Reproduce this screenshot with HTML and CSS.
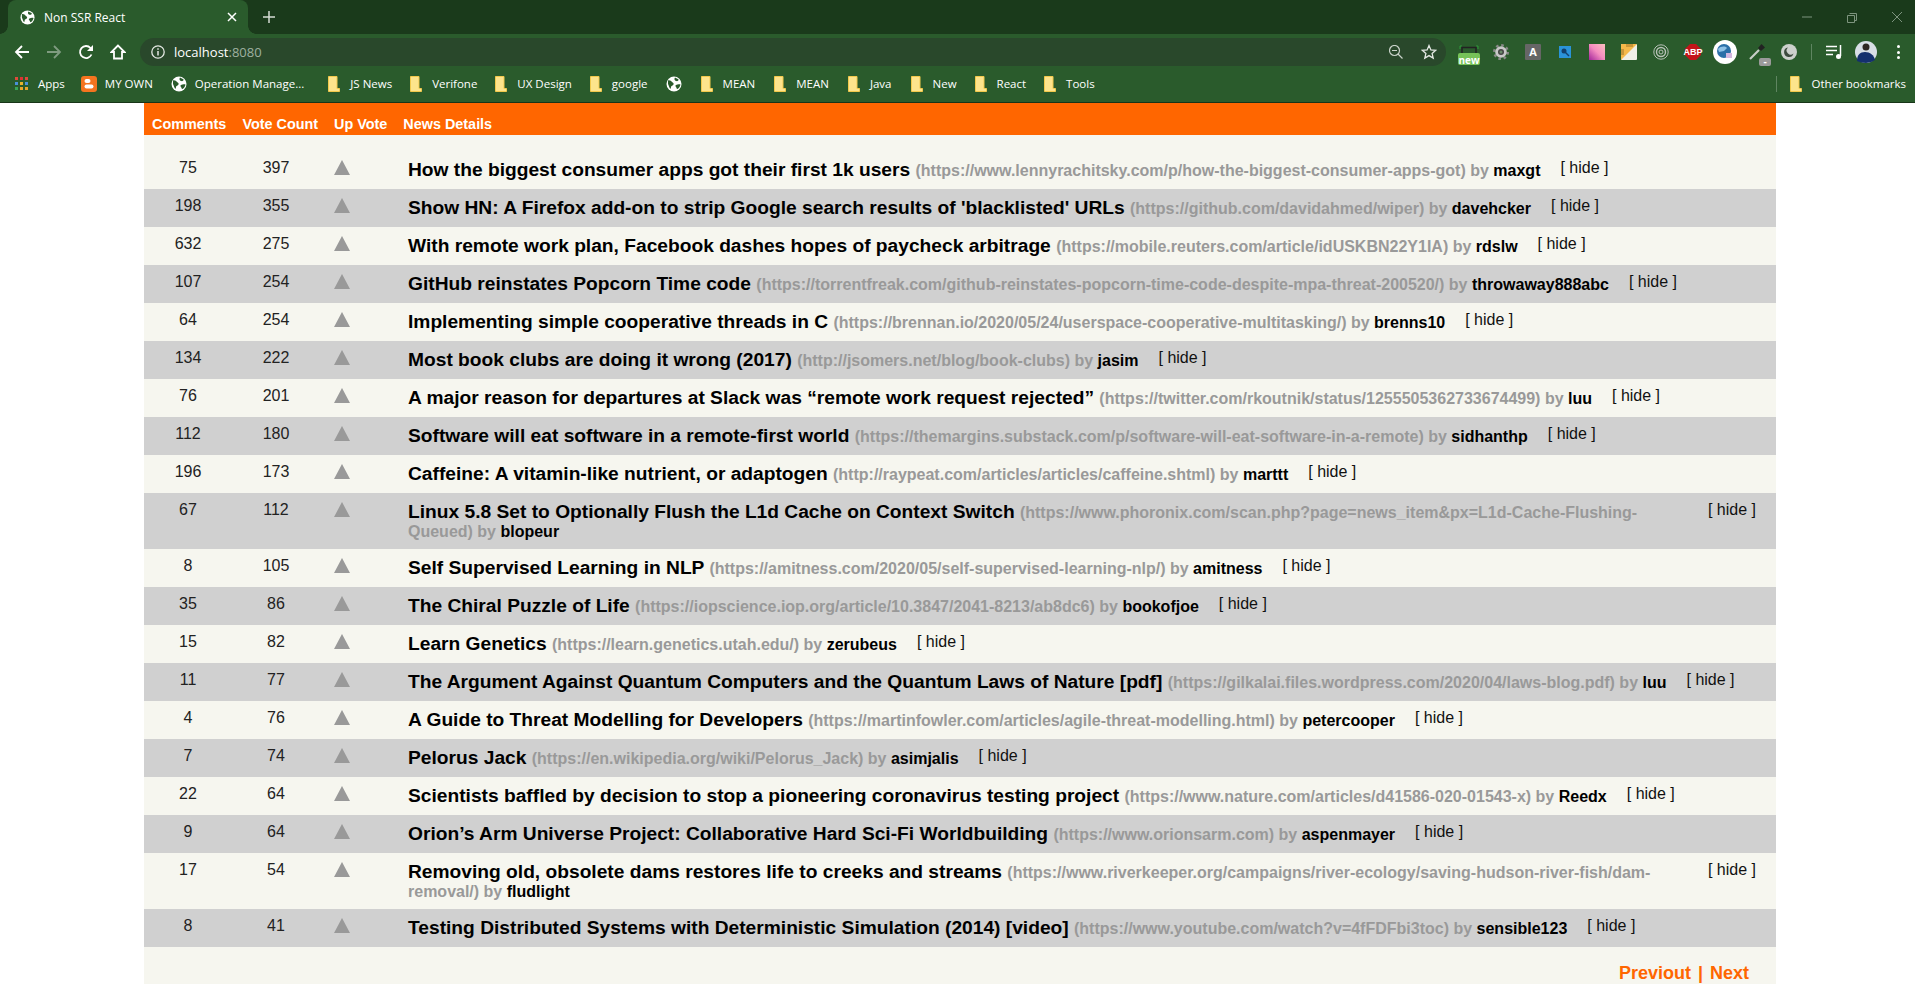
FILE: index.html

```html
<!DOCTYPE html>
<html lang="en">
<head>
    <meta charset="UTF-8">
    <meta name="viewport" content="width=device-width, initial-scale=1.0">
    <title>Non SSR React</title>
    <link rel="stylesheet" href="styles.css">
</head>
<body>

<svg class="sprites" width="0" height="0">
    <symbol id="globe" viewBox="0 0 16 16">
        <circle cx="8" cy="8" r="7.5" fill="#fff"/>
        <path d="M2 4.5c2-.5 3 .5 4 1.5s2 1 1.5 2.5-2.5 1-2.5 2.5-.5 2-1 1.5S2.5 9 2 8zM9 1.5c1 1 3 1 3.500 2s-1 2-2.500 1.500S8 3 9 1.500zM10 9c1.500-1 3.500-1 4.500-.5-.5 2-1.500 3.500-3 4.500-1 0-1-1.500-1.500-2s-1-1.500 0-2z" fill="#2a5b2c"/>
    </symbol>
    <symbol id="folder" viewBox="0 0 12 16">
        <path d="M.5.5h8.500v12h2.500v3H.5z" fill="#fde48c" stroke="#f2c94c"/>
    </symbol>
</svg>

<div class="browser">
    <div class="tab-strip">
        <div class="tab">
            <svg class="tab-icon"><use href="#globe"/></svg>
            <span class="tab-title">Non SSR React</span>
            <svg class="tab-close" viewBox="0 0 10 10"><path d="M1 1l8 8M9 1l-8 8" stroke="#fff" stroke-width="1.5"/></svg>
        </div>
        <svg class="new-tab" viewBox="0 0 12 12"><path d="M6 0v12M0 6h12" stroke="#d5dcd5" stroke-width="1.5"/></svg>
        <div class="window-controls">
            <svg viewBox="0 0 12 12"><path d="M1 6h10" stroke="#7d947e"/></svg>
            <svg viewBox="0 0 12 12"><path d="M3.500 2.500h7v7h-2M1.500 4.500h7v7h-7z" fill="none" stroke="#7d947e"/></svg>
            <svg viewBox="0 0 12 12"><path d="M1 1l10 10M11 1L1 11" stroke="#7d947e"/></svg>
        </div>
    </div>

    <div class="toolbar">
        <div class="nav-buttons">
            <div class="slot"><svg viewBox="0 0 16 16"><path d="M15 8H2M8 2L2 8l6 6" fill="none" stroke="#fff" stroke-width="1.8"/></svg></div>
            <div class="slot"><svg viewBox="0 0 16 16"><path d="M1 8h13M8 2l6 6-6 6" fill="none" stroke="#7f9b80" stroke-width="1.8"/></svg></div>
            <div class="slot"><svg viewBox="0 0 16 16"><path d="M13.500 10.500A6 6 0 1 1 12.500 4L14 5.500" fill="none" stroke="#fff" stroke-width="1.8"/><path d="M15 1v6H9z" fill="#fff"/></svg></div>
            <div class="slot"><svg viewBox="0 0 16 16"><path d="M8 1.500L1.500 8H4v6.500h8V8h2.500z" fill="none" stroke="#fff" stroke-width="1.8"/></svg></div>
        </div>
        <div class="address-bar">
            <svg class="info-icon" viewBox="0 0 14 14"><circle cx="7" cy="7" r="6.2" fill="none" stroke="#e4e8e4" stroke-width="1.3"/><path d="M7 6v4.500M7 3.200v1.500" stroke="#e4e8e4" stroke-width="1.5"/></svg>
            <span class="url">localhost<span class="url-port">:8080</span></span>
            <svg class="zoom-icon" viewBox="0 0 14 14"><circle cx="5.5" cy="5.5" r="5" fill="none" stroke="#c9d2c9" stroke-width="1.2"/><path d="M9 9l4.500 4.500M3 5.500h5" stroke="#c9d2c9" stroke-width="1.2"/></svg>
            <svg class="star-icon" viewBox="0 0 16 16"><path d="M8 1.500l1.900 4.400 4.800.4-3.600 3.100 1.100 4.700L8 11.600l-4.200 2.500 1.100-4.700-3.600-3.100 4.800-.4z" fill="none" stroke="#e4e8e4" stroke-width="1.3"/></svg>
        </div>
        <div class="extensions">
            <div class="slot ext-new">
                <svg viewBox="0 0 22 22"><path d="M2 6V3h2M18 3h2v3" fill="none" stroke="#2f9a3a"/><path d="M4 10V4.500h14V10" fill="none" stroke="#222" stroke-width="1.5"/><rect y="10" width="22" height="12" rx="2" fill="#76c258"/></svg>
                <span class="ext-new-label">new</span>
            </div>
            <div class="slot"><svg viewBox="0 0 16 16"><circle cx="8" cy="8" r="6.800" fill="none" stroke="#8a8a8a" stroke-width="2.4" stroke-dasharray="2.600 2.740"/><circle cx="8" cy="8" r="5.800" fill="#c8c8c8"/><circle cx="8" cy="8" r="3" fill="#444"/><circle cx="8" cy="8" r="1.500" fill="#6a8a6a"/></svg></div>
            <div class="slot"><div class="ext-letter">A</div></div>
            <div class="slot"><svg class="ext-small" viewBox="0 0 12 12"><rect width="12" height="12" fill="#2a93d8"/><circle cx="5" cy="5" r="2.500" fill="#12406b"/><path d="M6 6l4 4" stroke="#12406b" stroke-width="1.5"/></svg></div>
            <div class="slot"><div class="ext-pink"></div></div>
            <div class="slot"><svg viewBox="0 0 16 16"><rect width="16" height="16" rx="1" fill="#f0efe8"/><path d="M0 16V1q0-1 1-1h15z" fill="#f5b84a"/><path d="M5 0h7v3H5zM0 5h3v6H0z" fill="#c9963a"/></svg></div>
            <div class="slot"><svg viewBox="0 0 16 16" fill="none" stroke="#b9c2b9"><circle cx="8" cy="8" r="7.2"/><circle cx="8" cy="8" r="4.500" stroke-width="1.4"/><circle cx="8" cy="8" r="2"/></svg></div>
            <div class="slot"><svg viewBox="0 0 16 16"><path d="M5 0h6l5 5v6l-5 5H5l-5-5V5z" fill="#c4141a"/></svg><span class="ext-abp">ABP</span></div>
            <div class="slot"><svg class="ext-large" viewBox="0 0 24 24"><circle cx="12" cy="12" r="12" fill="#fff"/><circle cx="11" cy="11" r="7" fill="#2b6fa8"/><path d="M5 9c3-3 7-3 9-1l-3 3-5 1z" fill="#8ec1e6"/><rect x="13" y="13" width="6" height="5" fill="#d3b7e0"/></svg></div>
            <div class="slot">
                <svg viewBox="0 0 16 16"><path d="M1 15L10 6" stroke="#c9cec9" stroke-width="2.2"/><path d="M9 4l3.500-4 3.500 3.500-4 3.500z" fill="#222"/></svg>
                <span class="ext-pen-badge">-</span>
            </div>
            <div class="slot"><svg viewBox="0 0 16 16"><circle cx="8" cy="8" r="8" fill="#ccd0cc"/><path d="M7 3.500a4.800 4.800 0 1 0 5.500 6A4 4 0 0 1 7 3.500z" fill="#3c4a3d"/></svg></div>
            <div class="toolbar-sep"></div>
            <div class="slot"><svg viewBox="0 0 16 16"><path d="M0 2.500h11M0 6.500h11M0 10.500h7" stroke="#fff" stroke-width="1.5"/><path d="M14.500 1v11" stroke="#fff" stroke-width="1.5"/><circle cx="12.500" cy="12.500" r="2.500" fill="#fff"/></svg></div>
            <div class="slot"><svg class="ext-avatar" viewBox="0 0 22 22"><circle cx="11" cy="11" r="11" fill="#d8dfe6"/><path d="M2 20c0-6 3-9 8-9s9 3 10 8q-4 3-9 3t-9-2z" fill="#14306e"/><circle cx="11" cy="6" r="3.500" fill="#2e2622"/></svg></div>
            <div class="slot"><div class="kebab"><i></i><i></i><i></i></div></div>
        </div>
    </div>

    <div class="bookmarks">
        <div class="bookmark bookmark-apps">
            <svg class="apps-icon" viewBox="0 0 13 13">
                <rect width="3" height="3" fill="#e04a3c"/><rect x="5" width="3" height="3" fill="#d33"/><rect x="10" width="3" height="3" fill="#e04a3c"/>
                <rect y="5" width="3" height="3" fill="#4a90d9"/><rect x="5" y="5" width="3" height="3" fill="#e8b32c"/><rect x="10" y="5" width="3" height="3" fill="#4a90d9"/>
                <rect y="10" width="3" height="3" fill="#3aa655"/><rect x="5" y="10" width="3" height="3" fill="#e8a52c"/><rect x="10" y="10" width="3" height="3" fill="#e8a52c"/>
            </svg>
            <span>Apps</span>
        </div>
        <div class="bookmark bookmark-blog">
            <svg class="site-icon" viewBox="0 0 16 16"><rect width="16" height="16" rx="3" fill="#f5741f"/><rect x="3.5" y="3" width="6" height="4" rx="2" fill="#fff"/><rect x="3.5" y="8.500" width="9" height="4" rx="2" fill="#fff"/></svg>
            <span>MY OWN</span>
        </div>
        <div class="bookmark bookmark-ops">
            <svg class="site-icon"><use href="#globe"/></svg>
            <span>Operation Manage...</span>
        </div>
        <div class="bookmark"><svg class="folder-icon"><use href="#folder"/></svg><span>JS News</span></div>
        <div class="bookmark"><svg class="folder-icon"><use href="#folder"/></svg><span>Verifone</span></div>
        <div class="bookmark"><svg class="folder-icon"><use href="#folder"/></svg><span>UX Design</span></div>
        <div class="bookmark"><svg class="folder-icon"><use href="#folder"/></svg><span>google</span></div>
        <div class="bookmark bookmark-wide"><svg class="site-icon"><use href="#globe"/></svg></div>
        <div class="bookmark bookmark-wide"><svg class="folder-icon"><use href="#folder"/></svg><span>MEAN</span></div>
        <div class="bookmark bookmark-wide"><svg class="folder-icon"><use href="#folder"/></svg><span>MEAN</span></div>
        <div class="bookmark bookmark-wide"><svg class="folder-icon"><use href="#folder"/></svg><span>Java</span></div>
        <div class="bookmark"><svg class="folder-icon"><use href="#folder"/></svg><span>New</span></div>
        <div class="bookmark"><svg class="folder-icon"><use href="#folder"/></svg><span>React</span></div>
        <div class="bookmark"><svg class="folder-icon"><use href="#folder"/></svg><span>Tools</span></div>
        <div class="bookmark-other">
            <svg class="folder-icon"><use href="#folder"/></svg><span>Other bookmarks</span>
        </div>
    </div>
</div>

<div class="container">
    <div class="news-header">
        <span>Comments</span>
        <span>Vote Count</span>
        <span>Up Vote</span>
        <span>News Details</span>
    </div>

    <div class="news-list">
        <div class="news-row">
            <div class="count">75</div><div class="count">397</div><div class="up-vote"><div class="triangle"></div></div>
            <div class="details"><span class="news-title">How the biggest consumer apps got their first 1k users </span>(https://www.lennyrachitsky.com/p/how-the-biggest-consumer-apps-got) by <span class="news-author">maxgt</span></div>
            <div class="hide-link">[ hide ]</div>
        </div>
        <div class="news-row">
            <div class="count">198</div><div class="count">355</div><div class="up-vote"><div class="triangle"></div></div>
            <div class="details"><span class="news-title">Show HN: A Firefox add-on to strip Google search results of 'blacklisted' URLs </span>(https://github.com/davidahmed/wiper) by <span class="news-author">davehcker</span></div>
            <div class="hide-link">[ hide ]</div>
        </div>
        <div class="news-row">
            <div class="count">632</div><div class="count">275</div><div class="up-vote"><div class="triangle"></div></div>
            <div class="details"><span class="news-title">With remote work plan, Facebook dashes hopes of paycheck arbitrage </span>(https://mobile.reuters.com/article/idUSKBN22Y1IA) by <span class="news-author">rdslw</span></div>
            <div class="hide-link">[ hide ]</div>
        </div>
        <div class="news-row">
            <div class="count">107</div><div class="count">254</div><div class="up-vote"><div class="triangle"></div></div>
            <div class="details"><span class="news-title">GitHub reinstates Popcorn Time code </span>(https://torrentfreak.com/github-reinstates-popcorn-time-code-despite-mpa-threat-200520/) by <span class="news-author">throwaway888abc</span></div>
            <div class="hide-link">[ hide ]</div>
        </div>
        <div class="news-row">
            <div class="count">64</div><div class="count">254</div><div class="up-vote"><div class="triangle"></div></div>
            <div class="details"><span class="news-title">Implementing simple cooperative threads in C </span>(https://brennan.io/2020/05/24/userspace-cooperative-multitasking/) by <span class="news-author">brenns10</span></div>
            <div class="hide-link">[ hide ]</div>
        </div>
        <div class="news-row">
            <div class="count">134</div><div class="count">222</div><div class="up-vote"><div class="triangle"></div></div>
            <div class="details"><span class="news-title">Most book clubs are doing it wrong (2017) </span>(http://jsomers.net/blog/book-clubs) by <span class="news-author">jasim</span></div>
            <div class="hide-link">[ hide ]</div>
        </div>
        <div class="news-row">
            <div class="count">76</div><div class="count">201</div><div class="up-vote"><div class="triangle"></div></div>
            <div class="details"><span class="news-title">A major reason for departures at Slack was “remote work request rejected” </span>(https://twitter.com/rkoutnik/status/1255505362733674499) by <span class="news-author">luu</span></div>
            <div class="hide-link">[ hide ]</div>
        </div>
        <div class="news-row">
            <div class="count">112</div><div class="count">180</div><div class="up-vote"><div class="triangle"></div></div>
            <div class="details"><span class="news-title">Software will eat software in a remote-first world </span>(https://themargins.substack.com/p/software-will-eat-software-in-a-remote) by <span class="news-author">sidhanthp</span></div>
            <div class="hide-link">[ hide ]</div>
        </div>
        <div class="news-row">
            <div class="count">196</div><div class="count">173</div><div class="up-vote"><div class="triangle"></div></div>
            <div class="details"><span class="news-title">Caffeine: A vitamin-like nutrient, or adaptogen </span>(http://raypeat.com/articles/articles/caffeine.shtml) by <span class="news-author">marttt</span></div>
            <div class="hide-link">[ hide ]</div>
        </div>
        <div class="news-row">
            <div class="count">67</div><div class="count">112</div><div class="up-vote"><div class="triangle"></div></div>
            <div class="details"><span class="news-title">Linux 5.8 Set to Optionally Flush the L1d Cache on Context Switch </span>(https://www.phoronix.com/scan.php?page=news_item&amp;px=L1d-Cache-Flushing-Queued) by <span class="news-author">blopeur</span></div>
            <div class="hide-link">[ hide ]</div>
        </div>
        <div class="news-row">
            <div class="count">8</div><div class="count">105</div><div class="up-vote"><div class="triangle"></div></div>
            <div class="details"><span class="news-title">Self Supervised Learning in NLP </span>(https://amitness.com/2020/05/self-supervised-learning-nlp/) by <span class="news-author">amitness</span></div>
            <div class="hide-link">[ hide ]</div>
        </div>
        <div class="news-row">
            <div class="count">35</div><div class="count">86</div><div class="up-vote"><div class="triangle"></div></div>
            <div class="details"><span class="news-title">The Chiral Puzzle of Life </span>(https://iopscience.iop.org/article/10.3847/2041-8213/ab8dc6) by <span class="news-author">bookofjoe</span></div>
            <div class="hide-link">[ hide ]</div>
        </div>
        <div class="news-row">
            <div class="count">15</div><div class="count">82</div><div class="up-vote"><div class="triangle"></div></div>
            <div class="details"><span class="news-title">Learn Genetics </span>(https://learn.genetics.utah.edu/) by <span class="news-author">zerubeus</span></div>
            <div class="hide-link">[ hide ]</div>
        </div>
        <div class="news-row">
            <div class="count">11</div><div class="count">77</div><div class="up-vote"><div class="triangle"></div></div>
            <div class="details"><span class="news-title">The Argument Against Quantum Computers and the Quantum Laws of Nature [pdf] </span>(https://gilkalai.files.wordpress.com/2020/04/laws-blog.pdf) by <span class="news-author">luu</span></div>
            <div class="hide-link">[ hide ]</div>
        </div>
        <div class="news-row">
            <div class="count">4</div><div class="count">76</div><div class="up-vote"><div class="triangle"></div></div>
            <div class="details"><span class="news-title">A Guide to Threat Modelling for Developers </span>(https://martinfowler.com/articles/agile-threat-modelling.html) by <span class="news-author">petercooper</span></div>
            <div class="hide-link">[ hide ]</div>
        </div>
        <div class="news-row">
            <div class="count">7</div><div class="count">74</div><div class="up-vote"><div class="triangle"></div></div>
            <div class="details"><span class="news-title">Pelorus Jack </span>(https://en.wikipedia.org/wiki/Pelorus_Jack) by <span class="news-author">asimjalis</span></div>
            <div class="hide-link">[ hide ]</div>
        </div>
        <div class="news-row">
            <div class="count">22</div><div class="count">64</div><div class="up-vote"><div class="triangle"></div></div>
            <div class="details"><span class="news-title">Scientists baffled by decision to stop a pioneering coronavirus testing project </span>(https://www.nature.com/articles/d41586-020-01543-x) by <span class="news-author">Reedx</span></div>
            <div class="hide-link">[ hide ]</div>
        </div>
        <div class="news-row">
            <div class="count">9</div><div class="count">64</div><div class="up-vote"><div class="triangle"></div></div>
            <div class="details"><span class="news-title">Orion’s Arm Universe Project: Collaborative Hard Sci-Fi Worldbuilding </span>(https://www.orionsarm.com) by <span class="news-author">aspenmayer</span></div>
            <div class="hide-link">[ hide ]</div>
        </div>
        <div class="news-row">
            <div class="count">17</div><div class="count">54</div><div class="up-vote"><div class="triangle"></div></div>
            <div class="details"><span class="news-title">Removing old, obsolete dams restores life to creeks and streams </span>(https://www.riverkeeper.org/campaigns/river-ecology/saving-hudson-river-fish/dam-removal/) by <span class="news-author">fludlight</span></div>
            <div class="hide-link">[ hide ]</div>
        </div>
        <div class="news-row">
            <div class="count">8</div><div class="count">41</div><div class="up-vote"><div class="triangle"></div></div>
            <div class="details"><span class="news-title">Testing Distributed Systems with Deterministic Simulation (2014) [video] </span>(https://www.youtube.com/watch?v=4fFDFbi3toc) by <span class="news-author">sensible123</span></div>
            <div class="hide-link">[ hide ]</div>
        </div>
    </div>

    <div class="pager">
        <a href="#">Previout</a>
        <span>|</span>
        <a href="#">Next</a>
    </div>
</div>

</body>
</html>
```

FILE: styles.css

```css
body {
    font-family: "Liberation Sans", Arial, sans-serif;
    margin: 0;
    padding: 0;
    background-color: #ffffff;
}
.sprites {
    position: absolute;
}

/* Browser chrome */
.browser {
    font-family: "Open Sans", "Noto Sans", sans-serif;
    color: #ffffff;
    background-color: #2a5b2c;
    border-bottom: 1px solid #173518;
}
.tab-strip {
    display: flex;
    align-items: center;
    height: 34px;
    background-color: #1a3a1b;
}
.tab {
    position: relative;
    display: flex;
    align-items: center;
    box-sizing: border-box;
    width: 240px;
    height: 34px;
    margin-left: 8px;
    padding: 0 11px 0 12px;
    background-color: #2a5b2c;
    border-radius: 8px 8px 0 0;
}
.tab::before, .tab::after {
    content: "";
    position: absolute;
    bottom: 0;
    width: 8px;
    height: 8px;
}
.tab::before {
    left: -8px;
    background: radial-gradient(circle at 0 0, transparent 7.5px, #2a5b2c 8px);
}
.tab::after {
    right: -8px;
    background: radial-gradient(circle at 100% 0, transparent 7.5px, #2a5b2c 8px);
}
.tab-icon {
    width: 15px;
    height: 15px;
    flex: none;
}
.tab-title {
    flex: 1;
    margin-left: 9px;
    font-size: 12px;
}
.tab-close {
    width: 10px;
    height: 10px;
}
.new-tab {
    width: 12px;
    height: 12px;
    margin-left: 15px;
}
.window-controls {
    display: flex;
    gap: 33px;
    margin-left: auto;
    margin-right: 12px;
}
.window-controls svg {
    width: 12px;
    height: 12px;
}
.toolbar {
    display: flex;
    align-items: center;
    height: 28px;
    padding: 4px 1px 0 6px;
}
.nav-buttons, .extensions {
    display: flex;
    align-items: center;
}
.slot {
    position: relative;
    display: flex;
    align-items: center;
    justify-content: center;
    width: 32px;
    height: 28px;
}
.slot svg {
    width: 16px;
    height: 16px;
}
.slot .ext-small {
    width: 12px;
    height: 12px;
}
.slot .ext-large {
    width: 24px;
    height: 24px;
}
.slot .ext-avatar {
    width: 22px;
    height: 22px;
}
.address-bar {
    display: flex;
    align-items: center;
    width: 1306px;
    height: 28px;
    flex: none;
    margin-left: 6px;
    margin-right: 7px;
    padding: 0 9px 0 11px;
    box-sizing: border-box;
    background-color: #29482b;
    border-radius: 14px;
}
.info-icon {
    width: 14px;
    height: 14px;
}
.url {
    margin-left: 9px;
    font-size: 13px;
    flex: 1;
}
.url-port {
    color: #9fb0a0;
}
.zoom-icon {
    width: 14px;
    height: 14px;
    margin-right: 18px;
}
.star-icon {
    width: 16px;
    height: 16px;
}
.slot.ext-new svg {
    width: 22px;
    height: 22px;
    margin-top: 4px;
}
.ext-new-label {
    position: absolute;
    left: 5px;
    right: 5px;
    top: 16px;
    font-size: 10px;
    font-weight: 700;
    line-height: 12px;
    text-align: center;
}
.ext-letter {
    width: 16px;
    height: 16px;
    font-size: 11px;
    font-weight: 700;
    line-height: 16px;
    text-align: center;
    background-color: #666666;
    border-radius: 1px;
}
.ext-pink {
    width: 16px;
    height: 16px;
    background: linear-gradient(45deg, #a3259b, #f58cc0 50%, #fbc0c0);
}
.ext-abp {
    position: absolute;
    left: 0;
    right: 0;
    font-family: "Liberation Sans", sans-serif;
    font-size: 9px;
    font-weight: 700;
    text-align: center;
}
.ext-pen-badge {
    position: absolute;
    left: 18px;
    top: 20px;
    width: 12px;
    height: 8px;
    font-size: 10px;
    font-weight: 700;
    line-height: 7px;
    text-align: center;
    background-color: #9a9a9a;
    border-radius: 2px;
}
.toolbar-sep {
    width: 1px;
    height: 16px;
    margin: 0 6px;
    background-color: #5f8561;
}
.kebab {
    display: flex;
    flex-direction: column;
    gap: 2.5px;
}
.kebab i {
    display: block;
    width: 3px;
    height: 3px;
    background-color: #ffffff;
    border-radius: 50%;
}
.bookmarks {
    display: flex;
    align-items: center;
    height: 35px;
    font-size: 11.5px;
    padding: 0 0 1px 15px;
}
.bookmark {
    display: flex;
    align-items: center;
    gap: 10px;
    margin-right: 18px;
    white-space: nowrap;
}
.bookmark-wide {
    margin-right: 19px;
}
.bookmark-apps {
    margin-right: 16px;
}
.bookmark-blog {
    gap: 8px;
}
.bookmark-ops {
    gap: 8px;
    margin-right: 24px;
}
.apps-icon {
    width: 13px;
    height: 13px;
}
.site-icon {
    width: 16px;
    height: 16px;
}
.folder-icon {
    width: 12px;
    height: 16px;
}
.bookmark-other {
    display: flex;
    align-items: center;
    gap: 10px;
    margin-left: auto;
    padding: 0 9px 0 13px;
    height: 16px;
    border-left: 1px solid #5f8561;
    white-space: nowrap;
}

/* News table */
.container {
    margin: 0 139px 0 144px;
    background-color: #f6f6ef;
}
.news-header {
    display: flex;
    align-items: flex-end;
    gap: 16px;
    height: 32px;
    box-sizing: border-box;
    padding: 0 0 3px 8px;
    background-color: #ff6600;
    color: #ffffff;
    font-size: 14.4px;
    font-weight: bold;
}
.news-list {
    padding-top: 16px;
}
.news-row {
    display: flex;
    align-items: flex-start;
    box-sizing: border-box;
    min-height: 38px;
    padding: 8px 20px 8px 0;
}
.news-row:nth-child(even) {
    background-color: #d0d0d0;
}
.count {
    flex: none;
    width: 88px;
    font-size: 16px;
    line-height: 18px;
    text-align: center;
    color: #222222;
}
.up-vote {
    flex: none;
    width: 88px;
    padding: 1px 0 0 14px;
    box-sizing: border-box;
}
.triangle {
    width: 0;
    height: 0;
    border-left: 8px solid transparent;
    border-right: 8px solid transparent;
    border-bottom: 15px solid #999999;
}
.details {
    flex: 0 1 auto;
    font-size: 16px;
    line-height: 18px;
    font-weight: bold;
    color: #999999;
}
.news-title {
    font-size: 19.2px;
    line-height: 22px;
    color: #000000;
}
.news-author {
    color: #000000;
}
.hide-link {
    flex: none;
    margin-left: 20px;
    font-size: 16px;
    line-height: 18px;
    color: #111111;
}
.pager {
    display: flex;
    align-items: flex-end;
    justify-content: flex-end;
    gap: 7px;
    height: 37px;
    padding-right: 27px;
    box-sizing: border-box;
    font-size: 18px;
    font-weight: bold;
    color: #ff6600;
}
.pager a {
    color: #ff6600;
    text-decoration: none;
}
```
